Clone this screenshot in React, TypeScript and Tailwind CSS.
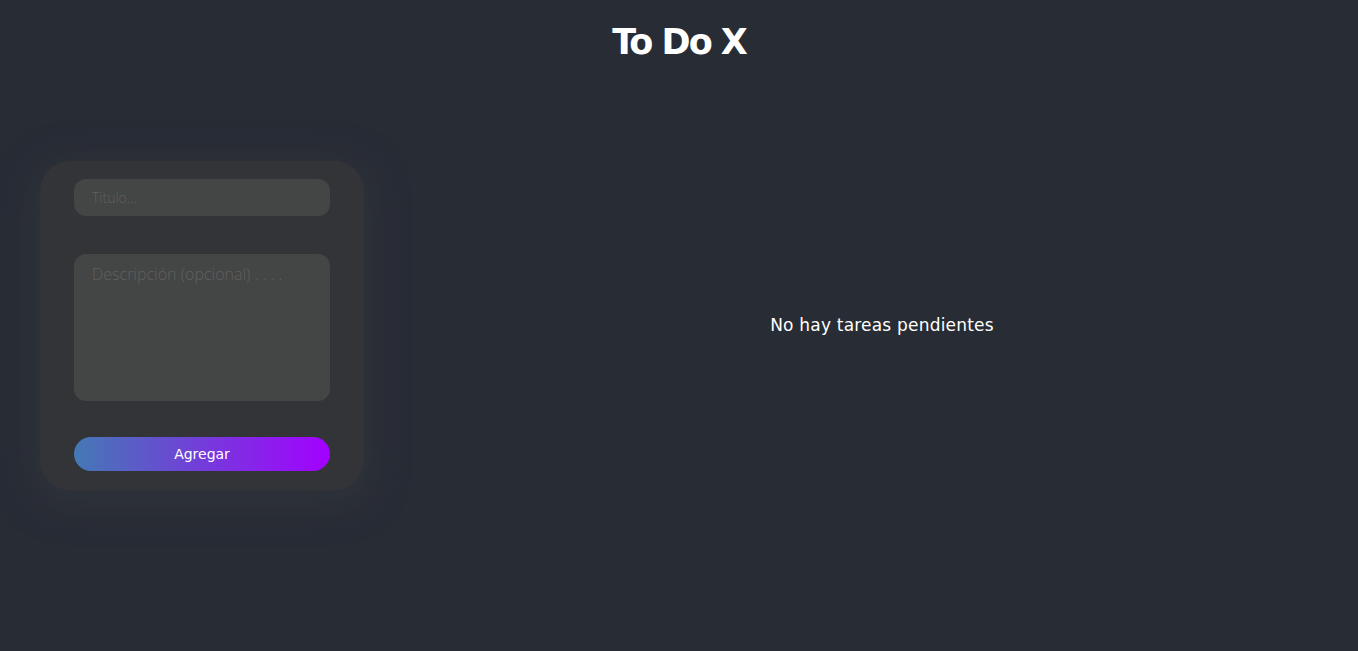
export default function App() {
  const font = { fontFamily: '"DejaVu Sans", "Open Sans", sans-serif' };
  const open = { fontFamily: '"Open Sans", "Noto Sans", sans-serif' };
  return (
    <div
      className="w-full h-[651px] bg-[#282c35] flex flex-col text-white overflow-hidden"
      style={font}
    >
      <header className="h-[84px] flex items-start justify-center pt-[18px] shrink-0">
        <h1
          className="text-[35px] leading-[48px] font-bold tracking-[-2px]"
          style={{ fontFamily: '"DejaVu Sans", sans-serif' }}
        >
          To Do X
        </h1>
      </header>
      <div className="flex-1 flex items-center pb-[84px]">
        <div className="w-[406px] shrink-0 pl-[40px]">
          <form
            className="w-[324px] h-[329px] rounded-[30px] bg-[#333438] shadow-[0_8px_34px_8px_rgba(50,53,60,0.75)] px-[34px] pt-[18px] flex flex-col"
            onSubmit={(e) => e.preventDefault()}
          >
            <input
              placeholder="Titulo..."
              style={open}
              className="h-[37px] w-full rounded-[12px] bg-[#444545] px-[18px] text-[14px] font-light text-white placeholder:text-[#5f6060] outline-none"
            />
            <textarea
              placeholder="Descripción (opcional) . . . ."
              style={open}
              className="mt-[38px] h-[147px] w-full rounded-[12px] bg-[#444545] px-[18px] py-[8px] text-[16px] font-light text-white placeholder:text-[#5f6060] outline-none resize-none"
            />
            <button
              type="submit"
              className="mt-[36px] h-[34px] w-full rounded-full bg-linear-to-r/srgb from-[#4479b5] to-[#a300ff] text-[14px] font-medium text-white"
            >
              Agregar
            </button>
          </form>
        </div>
        <div className="flex-1 flex justify-center">
          <p className="text-[17px] font-normal tracking-[0.2px]">No hay tareas pendientes</p>
        </div>
      </div>
    </div>
  );
}
